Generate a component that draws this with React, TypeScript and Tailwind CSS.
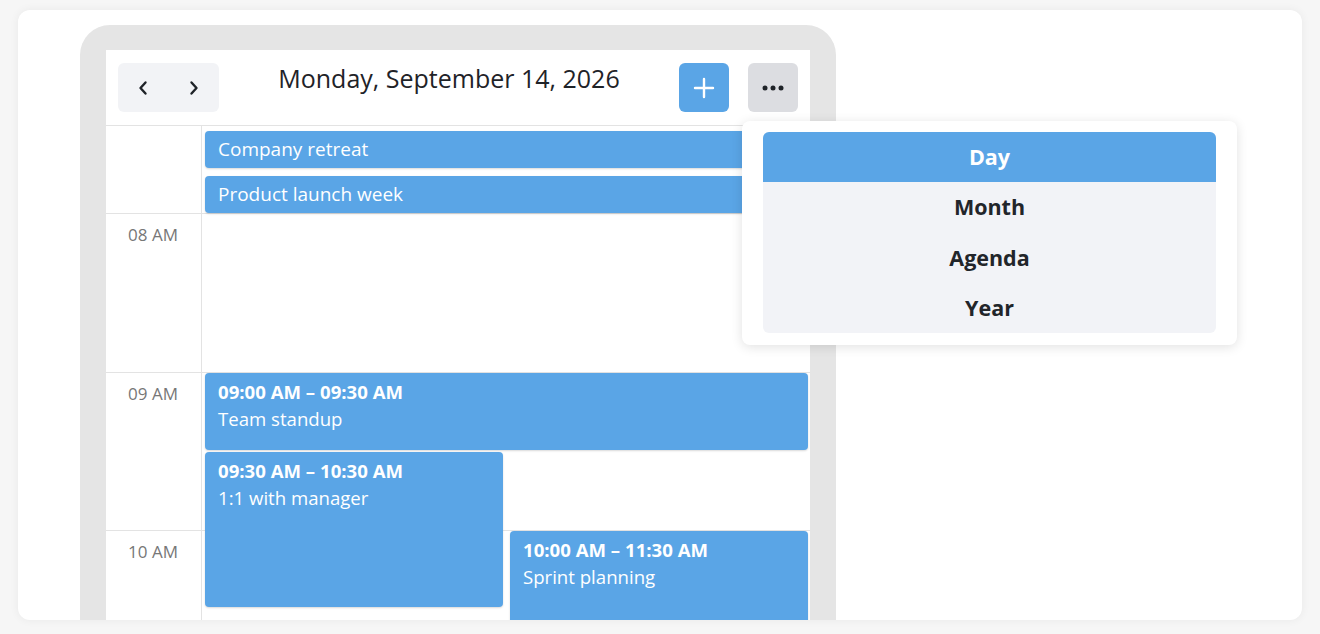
import React from "react";

const HOUR = 158;

type Ev = { start: string; end: string; title: string; top: number; height: number; left: number; width: number };

const timed: Ev[] = [
  { start: "09:00 AM", end: "09:30 AM", title: "Team standup", top: HOUR + 1, height: 77, left: 3, width: 603 },
  { start: "09:30 AM", end: "10:30 AM", title: "1:1 with manager", top: HOUR * 1.5 + 1, height: 155, left: 3, width: 298 },
  { start: "10:00 AM", end: "11:30 AM", title: "Sprint planning", top: HOUR * 2 + 1, height: 230, left: 308, width: 298 },
];

function Chevron({ dir }: { dir: "left" | "right" }) {
  return (
    <svg width="12" height="16" viewBox="0 0 12 16" fill="none">
      <path
        d={dir === "left" ? "M8.5 2.5 L3.5 8 L8.5 13.5" : "M3.5 2.5 L8.5 8 L3.5 13.5"}
        stroke="#1f2328"
        strokeWidth="2.4"
        strokeLinecap="round"
        strokeLinejoin="round"
      />
    </svg>
  );
}

function Header() {
  return (
    <div className="flex h-[76px] border-b border-[#e3e3e3] px-3 pt-[13px]">
      <div className="flex h-[49px] w-[101px] items-center justify-between rounded-md bg-[#f2f3f6] px-[19px]">
        <Chevron dir="left" />
        <Chevron dir="right" />
      </div>
      <div className="flex-1 text-center text-[25px] leading-[30px] text-[#1f2328]">Monday, September 14, 2026</div>
      <button className="flex h-[49px] w-[50px] items-center justify-center rounded-md bg-[#5aa5e6]">
        <svg width="22" height="22" viewBox="0 0 22 22">
          <path d="M11 2 V20 M2 11 H20" stroke="white" strokeWidth="2.4" strokeLinecap="round" />
        </svg>
      </button>
      <button className="ml-[19px] flex h-[49px] w-[50px] items-center justify-center rounded-md bg-[#dcdde1]">
        <svg width="24" height="6" viewBox="0 0 24 6">
          <circle cx="4" cy="3" r="2.5" fill="#1f2328" />
          <circle cx="12" cy="3" r="2.5" fill="#1f2328" />
          <circle cx="20" cy="3" r="2.5" fill="#1f2328" />
        </svg>
      </button>
    </div>
  );
}

function AllDay() {
  return (
    <div className="flex h-[88px] border-b border-[#e3e3e3]">
      <div className="w-[96px] shrink-0 border-r border-[#e3e3e3]" />
      <div className="flex flex-1 flex-col gap-2 pl-[3px] pr-[2px] pt-[5px]">
        {["Company retreat", "Product launch week"].map((t) => (
          <div
            key={t}
            className="flex h-[37px] items-center rounded-[4px] bg-[#5aa5e6] px-[13px] text-[19px] text-white shadow-[0_1px_2px_rgba(0,0,0,0.15)]"
          >
            {t}
          </div>
        ))}
      </div>
    </div>
  );
}

function Timeline() {
  const hours = ["08 AM", "09 AM", "10 AM"];
  return (
    <div className="flex">
      <div className="w-[96px] shrink-0 border-r border-[#e3e3e3]">
        {hours.map((h, i) => (
          <div key={h} className={`h-[158px] pr-[23px] pt-[8px] text-right text-[17px] text-[#777] ${i > 0 ? "border-t border-[#e3e3e3]" : ""}`}>
            {h}
          </div>
        ))}
      </div>
      <div className="relative flex-1">
        {hours.map((h, i) => (
          <div key={h} className={`h-[158px] ${i > 0 ? "border-t border-[#e3e3e3]" : ""}`} />
        ))}
        {timed.map((e) => (
          <div
            key={e.title}
            className="absolute rounded-[4px] bg-[#5aa5e6] px-[13px] pt-[5px] text-[18.6px] leading-[27px] text-white shadow-[0_1px_2px_rgba(0,0,0,0.15)]"
            style={{ top: e.top, height: e.height, left: e.left, width: e.width }}
          >
            <div className="font-bold">
              {e.start} – {e.end}
            </div>
            <div>{e.title}</div>
          </div>
        ))}
      </div>
    </div>
  );
}

function ViewMenu() {
  const items = ["Day", "Month", "Agenda", "Year"];
  return (
    <div className="absolute left-[724px] top-[111px] w-[495px] rounded-lg bg-white px-[21px] pb-[12px] pt-[11px] shadow-[0_2px_12px_rgba(0,0,0,0.12)]">
      <div className="overflow-hidden rounded-md bg-[#f2f3f7]">
        {items.map((it, i) => (
          <div
            key={it}
            className={`flex h-[50.25px] items-center justify-center text-[21.5px] font-bold ${
              i === 0 ? "bg-[#5aa5e6] text-white" : "text-[#22252a]"
            }`}
          >
            {it}
          </div>
        ))}
      </div>
    </div>
  );
}

export default function App() {
  return (
    <div className="h-[634px] w-[1320px] bg-[#f6f6f6] pl-[18px] pt-[10px]" style={{ fontFamily: '"Open Sans", "Noto Sans", sans-serif' }}>
      <div className="relative h-[610px] w-[1284px] overflow-hidden rounded-xl bg-white shadow-[0_0_10px_rgba(0,0,0,0.06)]">
        <div className="pl-[62px] pt-[15px]">
          <div className="w-[756px] rounded-t-[30px] bg-[#e5e5e5] px-[26px] pt-[25px]">
            <div className="h-[600px] bg-white">
              <Header />
              <AllDay />
              <Timeline />
            </div>
          </div>
        </div>
        <ViewMenu />
      </div>
    </div>
  );
}
